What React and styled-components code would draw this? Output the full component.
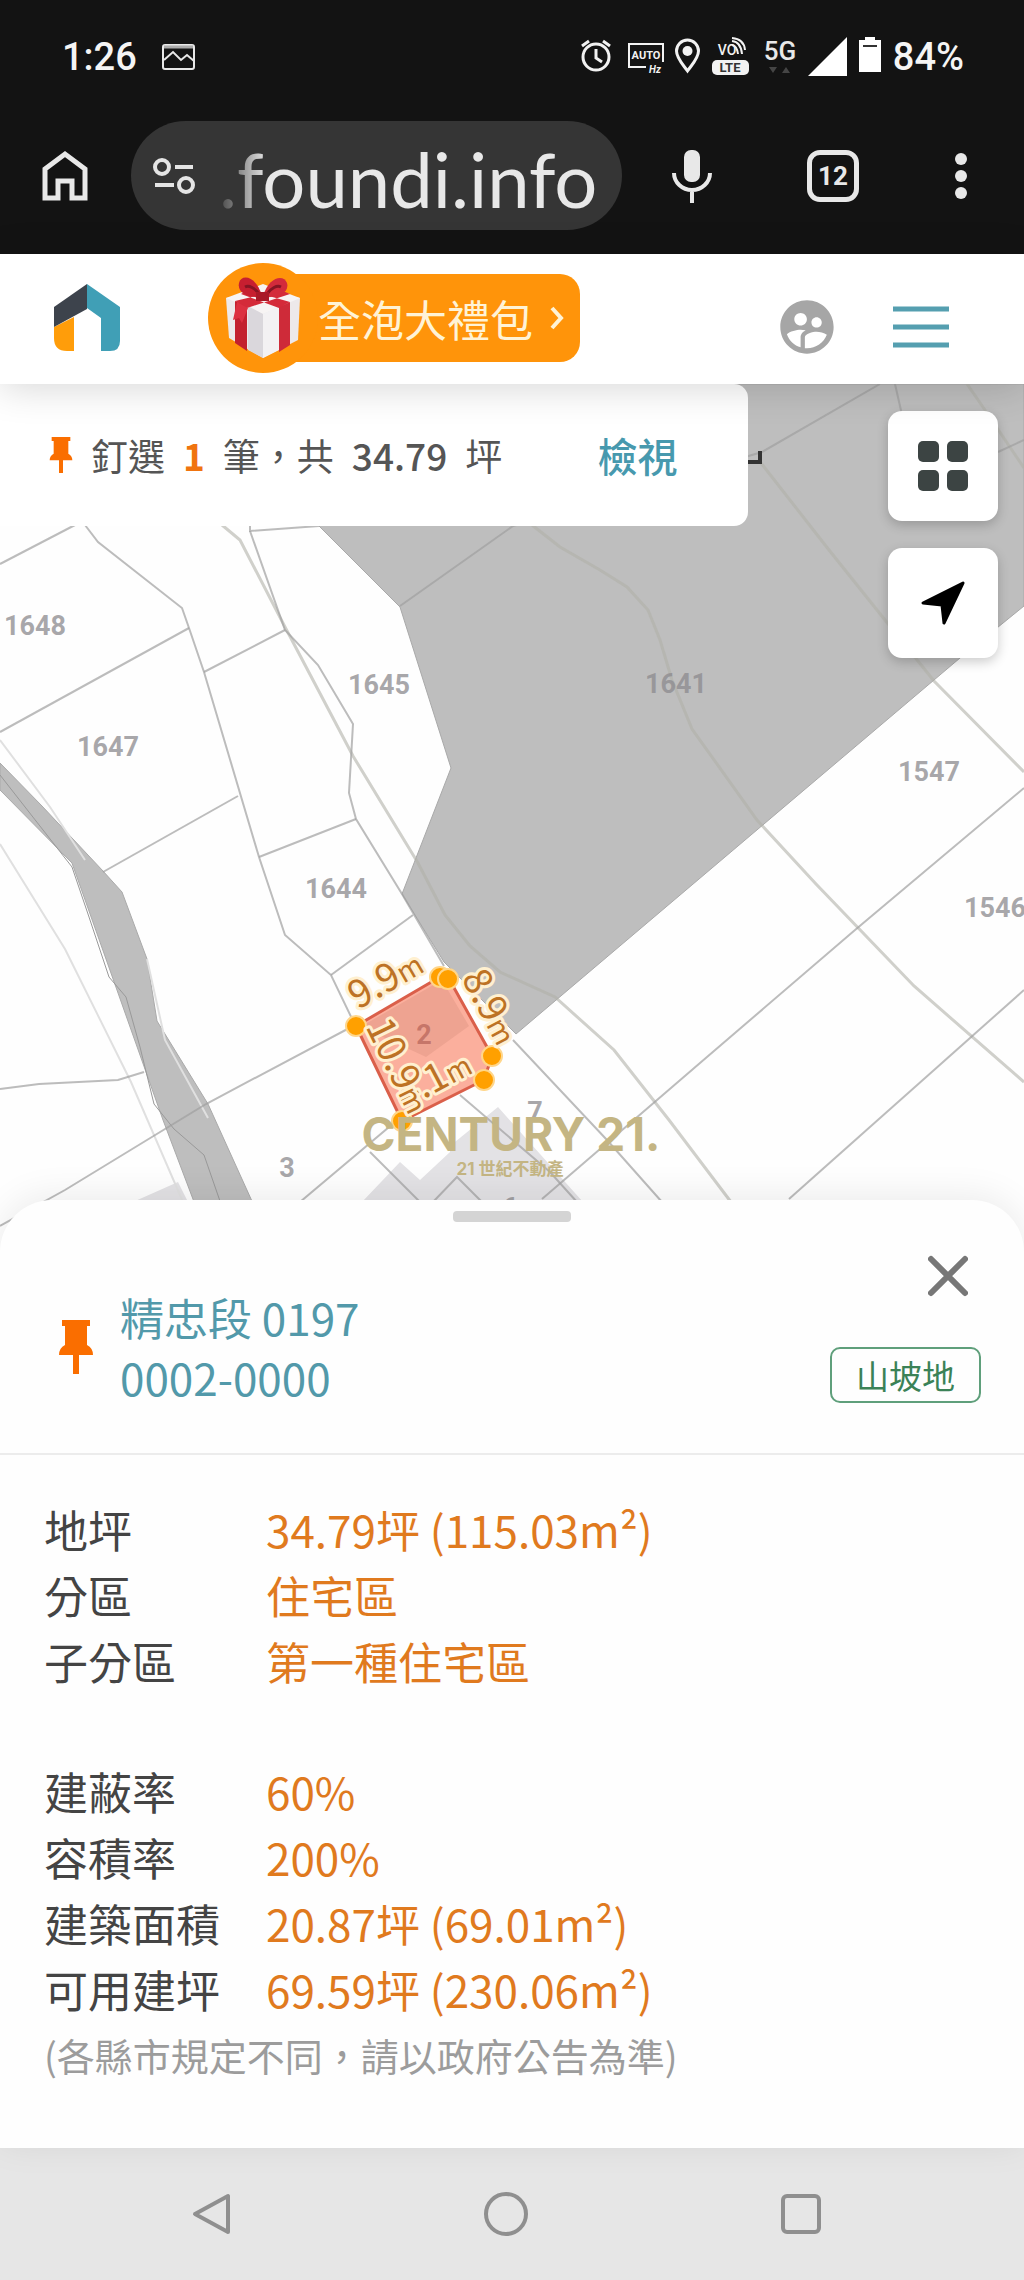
import styled, { createGlobalStyle } from "styled-components";
import { MdSupervisedUserCircle } from "react-icons/md";

const parcelLines = [
  "0,564 75,525",
  "85,525 98,542 182,608 189,628 204,672 259,857 285,935 331,975 355,1025",
  "0,732 189,628",
  "204,672 285,630",
  "250,510 250,531 319,526",
  "250,531 285,630 318,665 353,724 349,793 356,819 402,894 444,966",
  "259,857 356,819",
  "103,872 238,796",
  "331,975 413,915",
  "355,1025 206,1104 65,1190 0,1226",
  "0,1089 39,1084 118,1080 144,1072",
  "400,606 513,526 762,452 880,384",
  "895,384 910,450",
  "998,452 1024,440",
  "1024,788 855,930 700,1063 542,1199",
  "1024,990 789,1199",
  "513,1040 607,1140 662,1202",
  "460,1095 550,1172 577,1202",
  "395,1122 300,1202",
  "370,1152 420,1202",
  "433,1202 457,1177 482,1202",
];

const roadLines = [
  "222,525 240,540 285,627 353,756 418,863 445,915 470,946 500,972 555,997 614,1050 669,1120 731,1202",
  "532,525 560,547 600,570 627,587 648,610 660,640 672,680 692,729 757,820 816,884 914,986 1024,1082",
  "761,463 829,550 885,620 934,681 1024,772",
  "967,384 985,410 1024,468",
];

const lightLines = [
  "0,740 50,807 85,860",
  "0,844 65,949 131,1082 183,1202",
  "147,959 165,1040 208,1118",
  "0,384 24,415 28,432",
];

const lotLabels = [
  { text: "1648", x: 35, y: 635 },
  { text: "1647", x: 108, y: 756 },
  { text: "1645", x: 379, y: 694 },
  { text: "1644", x: 336, y: 898 },
  { text: "1641", x: 676, y: 693 },
  { text: "1547", x: 929, y: 781 },
  { text: "1546", x: 995, y: 917 },
  { text: "3", x: 287, y: 1177 },
  { text: "7", x: 535, y: 1121 },
  { text: "6", x: 510, y: 1217 },
];

const sideLabels = [
  { text: "9.9", x: 386, y: 980, angle: -30 },
  { text: "8.9", x: 490, y: 1007, angle: 62 },
  { text: "4.1", x: 434, y: 1080, angle: -28 },
  { text: "10.9", x: 398, y: 1066, angle: 64 },
];

const corners = [
  [356, 1026],
  [440, 977],
  [448, 979],
  [492, 1056],
  [484, 1080],
  [402, 1121],
];

const zoning = [
  { label: "地坪", value: "34.79坪 (115.03m²)" },
  { label: "分區", value: "住宅區" },
  { label: "子分區", value: "第一種住宅區" },
];

const building = [
  { label: "建蔽率", value: "60%" },
  { label: "容積率", value: "200%" },
  { label: "建築面積", value: "20.87坪 (69.01m²)" },
  { label: "可用建坪", value: "69.59坪 (230.06m²)" },
];

const StatusIcons = () => (
  <svg width="302" height="42" viewBox="582 37 302 42" fill="none" stroke="#f2f2f2" aria-hidden="true">
    <circle cx="597" cy="58" r="13" strokeWidth="3" />
    <path d="M597 50v9l6 4M583 47l7-5M611 47l-7-5" strokeWidth="3" />
    <path d="M647 68h-17V45h34v18" strokeWidth="2" />
    <text x="647" y="60" fontSize="11" fontWeight="700" fill="#f2f2f2" stroke="none" textAnchor="middle">AUTO</text>
    <text x="656" y="74" fontSize="10" fontWeight="700" fontStyle="italic" fill="#f2f2f2" stroke="none" textAnchor="middle">Hz</text>
    <path d="M688.500 72c-5-7-11-13-11-20a11 11 0 0 1 22 0c0 7-6 13-11 20z" strokeWidth="3" />
    <circle cx="688.500" cy="52" r="5" fill="#f2f2f2" stroke="none" />
    <text x="728" y="56" fontSize="14" fontWeight="500" fill="#f2f2f2" stroke="none" textAnchor="middle">VO</text>
    <path d="M733 46q5 1 6 9M733 42q9 1 10 13M733 39q12 1 13 12" strokeWidth="2" />
    <rect x="713" y="61" width="37" height="15" rx="5" fill="#f2f2f2" stroke="none" />
    <text x="731" y="73" fontSize="13" fontWeight="700" fill="#333" stroke="none" textAnchor="middle">LTE</text>
    <text x="781" y="61" fontSize="26" fontWeight="500" fill="#e8e8e8" stroke="none" textAnchor="middle">5G</text>
    <path d="M770 68h8l-4 6zM783 74h8l-4-6z" fill="#454545" stroke="none" />
    <path d="M848 38v39h-39z" fill="#fff" stroke="none" />
    <path d="M860 41h6v-3h10v3h6v32h-22z" fill="#fff" stroke="none" />
    <path d="M864 47h14" stroke="#333" strokeWidth="2" />
  </svg>
);

const Gift = () => (
  <svg width="76" height="84" viewBox="0 0 76 84" aria-hidden="true">
    <path d="M1 22 38 14l37 8-2 42-35 18L4 62z" fill="#ede9ea" />
    <path d="M1 22 38 8l37 14-37 16z" fill="#f7f4f4" />
    <path d="M23 30l15 8v44l-15-8z" fill="#dad7dc" />
    <path d="M38 38l16-8v44l-16 8z" fill="#f3f1f3" />
    <path d="M10 25l12 5v45l-12-8z" fill="#c3202e" />
    <path d="M54 31l11-5v43l-11 7z" fill="#ce2b39" />
    <path d="M10 25 56 14l9 4-43 14zM65 26 23 14l-7 4 38 14z" fill="#d42a39" />
    <path d="M37 21C23 22 12 17 14 7c2-9 17-8 23 13z" fill="#c71f30" />
    <path d="M38 21c14 1 27-4 24-14-3-9-18-7-24 13z" fill="#d32b3b" />
    <path d="M34 18c-4-6-10-9-14-7M42 18c4-6 10-9 14-7" stroke="#861523" strokeWidth="3" fill="none" />
    <path d="M31 16h13v9H31z" fill="#a91827" />
    <path d="M12 26 8 44l6-2 3 5 6-15z" fill="#dc3040" />
  </svg>
);

const Pin = ({ width, height }) => (
  <svg width={width} height={height} viewBox="0 0 34 54" aria-hidden="true">
    <path d="M3 0h28v6h-3v19q6 3 6 10H20v19h-6V35H0q0-7 6-10V6H3z" fill="#fa6e00" />
  </svg>
);

const LandMap = () => (
  <MapSvg viewBox="0 384 1024 876" role="img" aria-label="地籍圖">
    <rect y="384" width="1024" height="876" fill="#fefefe" />
    <path
      d="M319 526V384h705v222l-64 52-444 376-72-72-42-68 49-126-51-161z"
      fill="#bebebe"
      stroke="#a9a9a9"
      strokeWidth="1"
    />
    <path
      d="M0 763l42 43 61 65 19 21 25 67 10 62 51 83 43 95 7 16h-59l-36-95L72 863 0 790z"
      fill="#bebebe"
      stroke="#aaa"
      strokeWidth="1"
    />
    <path d="M0 775l72 92 17 50 20 60 17 20 14 50 14 57 20 25 30 26 34 98" fill="none" stroke="#999" strokeWidth="1" />
    <path d="M362 1202l38-40 20 18 30-28v-6l48-39 85 95zM133 1202l45-20 10 20z" fill="#e3e2e5" />
    <g fill="none" stroke="#e0e0e0" strokeWidth="2">
      {lightLines.map((points) => (
        <polyline key={points} points={points} />
      ))}
    </g>
    <g fill="none" stroke="#b0b0a8" strokeWidth="3" strokeOpacity="0.6">
      {roadLines.map((points) => (
        <polyline key={points} points={points} />
      ))}
    </g>
    <g fill="none" stroke="#a0a0a0" strokeOpacity="0.7" strokeWidth="2">
      {parcelLines.map((points) => (
        <polyline key={points} points={points} />
      ))}
    </g>
    <path d="M748 462h12V451" fill="none" stroke="#333" strokeWidth="4" />
    <LotText>
      {lotLabels.map((lot) => (
        <text key={lot.text} x={lot.x} y={lot.y}>
          {lot.text}
        </text>
      ))}
    </LotText>
    <path d="M356 1026l84-49h8l44 79-8 24-82 41z" fill="#fbaf9d" stroke="#da5f4a" strokeWidth="3" />
    <path d="M362 1026l80-46 27 46-43 31-62-29z" fill="#eea391" />
    <LotText $selected>
      <text x="424" y="1044">2</text>
    </LotText>
    <g fill="#ffa000" stroke="#ffd68a" strokeWidth="2">
      {corners.map(([x, y]) => (
        <circle key={x} cx={x} cy={y} r="10" />
      ))}
    </g>
    <SideText>
      {sideLabels.map((side) => (
        <text key={side.text} transform={`translate(${side.x} ${side.y}) rotate(${side.angle})`} y="12">
          {side.text}
          <tspan fontSize="28">m</tspan>
        </text>
      ))}
    </SideText>
    <Watermark>
      <text x="511" y="1151" fontSize="46">CENTURY 21.</text>
      <text x="510" y="1175" fontSize="17">21 世紀不動產</text>
    </Watermark>
  </MapSvg>
);

const App = () => {
  return (
    <Page lang="zh-Hant">
      <GlobalStyle />
      <StatusBar>
        <Clock>1:26</Clock>
        <svg width="34" height="26" viewBox="0 0 34 26" fill="none" stroke="#e8e8e8" strokeWidth="2" aria-hidden="true">
          <rect x="1" y="1" width="31" height="24" rx="2" />
          <path d="M2 3h29" strokeWidth="3" stroke="#aaa" />
          <path d="M2 16l9-8 8 8 6-5 7 6" />
        </svg>
        <StatusRight>
          <StatusIcons />
          <Clock>84%</Clock>
        </StatusRight>
      </StatusBar>

      <BrowserBar>
        <IconButton aria-label="首頁">
          <svg width="48" height="52" viewBox="0 0 48 52" fill="none" stroke="#e8e8e8" strokeWidth="5">
            <path d="M4 48V19L24 4l20 15v29H31V31H17v17z" />
          </svg>
        </IconButton>
        <AddressPill>
          <svg width="42" height="36" viewBox="0 0 42 36" fill="none" stroke="#e4e4e4" strokeWidth="4" aria-hidden="true">
            <circle cx="9" cy="9" r="7" />
            <path d="M22 9h18M2 27h19" />
            <circle cx="33" cy="27" r="7" />
          </svg>
          <Address>.foundi.info</Address>
        </AddressPill>
        <BrowserActions>
          <IconButton aria-label="語音搜尋">
            <svg width="40" height="54" viewBox="0 0 40 54" fill="none" stroke="#e8e8e8" strokeWidth="4">
              <rect x="12" y="1" width="16" height="32" rx="7" fill="#e8e8e8" stroke="none" />
              <path d="M2 24a18 17 0 0 0 36 0M20 41v13" />
            </svg>
          </IconButton>
          <TabsButton aria-label="分頁">12</TabsButton>
          <IconButton aria-label="更多">
            <svg width="14" height="46" viewBox="0 0 14 46" fill="#e8e8e8">
              <circle cx="7" cy="6" r="6" />
              <circle cx="7" cy="23" r="6" />
              <circle cx="7" cy="40" r="6" />
            </svg>
          </IconButton>
        </BrowserActions>
      </BrowserBar>

      <SiteHeader>
        <LogoLink href="#" aria-label="foundi">
          <svg width="68" height="68" viewBox="0 0 68 68">
            <path d="M1 43l20-10v34h-7Q1 67 1 54z" fill="#ff9d0a" />
            <path d="M34 0v25L1 43V23z" fill="#3d434c" />
            <path d="M34 0l33 23v34q0 10-10 10H48V34L34 24z" fill="#409fb6" />
          </svg>
        </LogoLink>
        <Promo href="#">
          <GiftCircle>
            <Gift />
          </GiftCircle>
          全泡大禮包
          <svg width="14" height="24" viewBox="0 0 14 24" fill="none" stroke="#fff3d6" strokeWidth="4" aria-hidden="true">
            <path d="M2 2l9 10-9 10" />
          </svg>
        </Promo>
        <HeaderActions>
          <IconButton aria-label="會員">
            <MdSupervisedUserCircle size={64} color="#a6a6a6" />
          </IconButton>
          <IconButton aria-label="選單">
            <svg width="56" height="44" viewBox="0 0 56 44" stroke="#559fb0" strokeWidth="5">
              <path d="M0 4h56M0 22h56M0 40h56" />
            </svg>
          </IconButton>
        </HeaderActions>
      </SiteHeader>

      <MapArea>
        <LandMap />
        <PinnedCard>
          <Pin width={24} height={36} />
          <span>釘選</span>
          <Count>1</Count>
          <span>筆，共</span>
          <Total>34.79</Total>
          <span>坪</span>
          <ViewButton>檢視</ViewButton>
        </PinnedCard>
        <MapTools>
          <MapButton aria-label="圖層">
            <svg width="50" height="50" viewBox="0 0 50 50" fill="#3c4443">
              <rect width="21" height="21" rx="5" />
              <rect x="29" width="21" height="21" rx="5" />
              <rect y="29" width="21" height="21" rx="5" />
              <rect x="29" y="29" width="21" height="21" rx="5" />
            </svg>
          </MapButton>
          <MapButton aria-label="定位">
            <svg width="44" height="44" viewBox="0 0 44 44">
              <path d="M42 2 23 42l-2-18L2 22z" fill="#000" stroke="#000" strokeWidth="3" strokeLinejoin="round" />
            </svg>
          </MapButton>
        </MapTools>
      </MapArea>

      <Sheet>
        <Handle />
        <SheetHead>
          <LotTitle href="#">
            <Pin width={34} height={54} />
            <span>
              精忠段 0197
              <br />
              0002-0000
            </span>
          </LotTitle>
          <SheetSide>
            <CloseButton aria-label="關閉">
              <svg width="40" height="42" viewBox="0 0 40 42" stroke="#777" strokeWidth="6" strokeLinecap="round">
                <path d="M3 4l34 34M37 4 3 38" />
              </svg>
            </CloseButton>
            <Badge>山坡地</Badge>
          </SheetSide>
        </SheetHead>
        <Details>
          {[zoning, building].map((rows) => (
            <Facts key={rows[0].label}>
              {rows.map((row) => (
                <Fact key={row.label}>
                  <dt>{row.label}</dt>
                  <FactValue>{row.value}</FactValue>
                </Fact>
              ))}
            </Facts>
          ))}
        </Details>
        <Note>(各縣市規定不同，請以政府公告為準)</Note>
      </Sheet>

      <SystemNav>
        <IconButton aria-label="返回">
          <svg width="40" height="44" viewBox="0 0 40 44" fill="none" stroke="#8f8f8f" strokeWidth="4" strokeLinejoin="round">
            <path d="M37 4v36L4 22z" />
          </svg>
        </IconButton>
        <IconButton aria-label="主畫面">
          <svg width="44" height="44" viewBox="0 0 44 44" fill="none" stroke="#8f8f8f" strokeWidth="4">
            <circle cx="22" cy="22" r="20" />
          </svg>
        </IconButton>
        <IconButton aria-label="最近使用">
          <svg width="40" height="40" viewBox="0 0 40 40" fill="none" stroke="#8f8f8f" strokeWidth="4">
            <rect x="2" y="2" width="36" height="36" rx="4" />
          </svg>
        </IconButton>
      </SystemNav>
    </Page>
  );
};

export default App;

const GlobalStyle = createGlobalStyle`
* {
  box-sizing: border-box;
}
body {
  margin: 0;
  background: #fefefe;
}
svg {
  display: block;
  flex-shrink: 0;
}
button {
  font: inherit;
  border: 0;
  padding: 0;
  background: none;
  cursor: pointer;
}
a {
  text-decoration: none;
}
`;

const Page = styled.div`
  min-height: 100vh;
  display: flex;
  flex-direction: column;
  font-family: "Noto Sans CJK TC", sans-serif;
  color: #444;
`;

const StatusBar = styled.div`
  display: flex;
  align-items: center;
  gap: 25px;
  height: 114px;
  padding: 0 60px 0 62px;
  background: #131313;
  color: #f5f5f5;
  font-family: Roboto, sans-serif;
`;

const StatusRight = styled.div`
  display: flex;
  align-items: center;
  gap: 10px;
  margin-left: auto;
`;

const Clock = styled.span`
  font-size: 38px;
  line-height: 44px;
  font-weight: 500;
`;

const BrowserBar = styled.div`
  display: flex;
  align-items: center;
  gap: 42px;
  padding: 7px 56px 24px 41px;
  background: #131313;
  font-family: Roboto, sans-serif;
`;

const IconButton = styled.button`
  display: flex;
  align-items: center;
  justify-content: center;
`;

const AddressPill = styled.div`
  display: flex;
  align-items: center;
  gap: 24px;
  flex: 1;
  height: 109px;
  padding: 0 16px 0 22px;
  border-radius: 55px;
  background: #353535;
`;

const Address = styled.span`
  padding-top: 6px;
  font-family: Lato, sans-serif;
  font-size: 76px;
  line-height: 96px;
  color: #e8e8e8;
  mask-image: linear-gradient(to right, rgba(0, 0, 0, 0.1), #000 48px);
`;

const BrowserActions = styled.div`
  display: flex;
  align-items: center;
  gap: 95px;
  padding-left: 8px;
`;

const TabsButton = styled.button`
  width: 52px;
  height: 52px;
  border: 5px solid #e8e8e8;
  border-radius: 13px;
  color: #e8e8e8;
  font-size: 26px;
  font-weight: 700;
`;

const SiteHeader = styled.header`
  position: relative;
  z-index: 2;
  display: flex;
  align-items: center;
  padding: 9px 75px 11px 53px;
  background: #fff;
  box-shadow: 0 4px 36px rgba(0, 0, 0, 0.16);
`;

const LogoLink = styled.a`
  margin-right: 87px;
`;

const Promo = styled.a`
  display: flex;
  align-items: center;
  height: 88px;
  margin: 11px 0;
  padding-right: 16px;
  border-radius: 20px;
  background: linear-gradient(to right, transparent 55px, #ff940a 55px);
  color: #fff3d6;
  font-size: 43px;
  line-height: 60px;

  > svg {
    margin-left: 17px;
  }
`;

const GiftCircle = styled.span`
  display: flex;
  align-items: center;
  justify-content: center;
  width: 110px;
  height: 110px;
  border-radius: 50%;
  background: #ff940a;
`;

const HeaderActions = styled.div`
  display: flex;
  align-items: center;
  gap: 54px;
  margin-left: auto;
  padding-top: 18px;
`;

const MapArea = styled.section`
  position: relative;
`;

const MapSvg = styled.svg`
  width: 100%;
  height: auto;
`;

const LotText = styled.g`
  font-family: Roboto, sans-serif;
  font-size: 27px;
  font-weight: 700;
  text-anchor: middle;
  fill: ${(props) => (props.$selected ? "#b9675c" : "#8c8a8e")};
  fill-opacity: 0.75;
`;

const SideText = styled.g`
  font-size: 38px;
  text-anchor: middle;
  fill: #bd7224;
  stroke: #fff0d0;
  stroke-width: 6px;
  stroke-linejoin: round;
  paint-order: stroke;
`;

const Watermark = styled.g`
  font-family: Inter, "Noto Sans CJK TC", sans-serif;
  font-weight: 700;
  text-anchor: middle;
  fill: #c4b583;
`;

const PinnedCard = styled.div`
  position: absolute;
  top: 0;
  left: 0;
  display: flex;
  align-items: center;
  gap: 18px;
  width: 73%;
  height: 142px;
  padding: 0 70px 0 49px;
  border-radius: 0 14px 14px 0;
  background: #fff;
  color: #555;
  font-size: 37px;
  line-height: 56px;
  white-space: nowrap;
`;

const Count = styled.strong`
  font-weight: 700;
  color: #f0740f;
`;

const Total = styled.strong`
  font-weight: 500;
`;

const ViewButton = styled.button`
  margin-left: auto;
  color: #4799ae;
  font-size: 40px;
  font-weight: 500;
`;

const MapTools = styled.div`
  position: absolute;
  top: 27px;
  right: 26px;
  display: flex;
  flex-direction: column;
  gap: 27px;
`;

const MapButton = styled.button`
  display: flex;
  align-items: center;
  justify-content: center;
  width: 110px;
  height: 110px;
  border-radius: 14px;
  background: #fff;
  box-shadow: 0 4px 12px rgba(0, 0, 0, 0.2);
`;

const Sheet = styled.main`
  position: relative;
  flex: 1;
  margin-top: -60px;
  padding-top: 11px;
  border-radius: 52px 52px 0 0;
  background: #fefefe;
  box-shadow: 0 -4px 36px rgba(0, 0, 0, 0.08);
`;

const Handle = styled.div`
  width: 118px;
  height: 11px;
  margin: 0 auto;
  border-radius: 4px;
  background: #d4d4d4;
`;

const SheetHead = styled.div`
  display: flex;
  align-items: flex-end;
  justify-content: space-between;
  padding: 33px 43px 46px 59px;
  border-bottom: 2px solid #ececec;
`;

const LotTitle = styled.a`
  display: flex;
  align-items: center;
  gap: 27px;
  color: #5299aa;
  font-size: 44px;
  line-height: 60px;
`;

const SheetSide = styled.div`
  display: flex;
  flex-direction: column;
  align-items: flex-end;
  gap: 50px;
  padding-bottom: 4px;
`;

const CloseButton = styled(IconButton)`
  margin-right: 13px;
`;

const Badge = styled.span`
  padding: 0 24px;
  border: 2px solid #5f9f7b;
  border-radius: 10px;
  color: #3b8257;
  font-size: 33px;
  line-height: 52px;
`;

const Details = styled.div`
  display: flex;
  flex-direction: column;
  gap: 64px;
  padding: 41px 44px 0;
`;

const Facts = styled.dl`
  margin: 0;
  font-size: 44px;
  line-height: 66px;
`;

const Fact = styled.div`
  display: grid;
  grid-template-columns: 222px 1fr;
`;

const FactValue = styled.dd`
  margin: 0;
  color: #e07a1e;
`;

const Note = styled.p`
  margin: 0;
  padding: 0 44px 48px;
  color: #9c9c9c;
  font-size: 38px;
  line-height: 66px;
`;

const SystemNav = styled.nav`
  display: grid;
  grid-template-columns: repeat(3, 1fr);
  height: 132px;
  padding: 0 76px 0 64px;
  background: #e6e6e6;
`;
